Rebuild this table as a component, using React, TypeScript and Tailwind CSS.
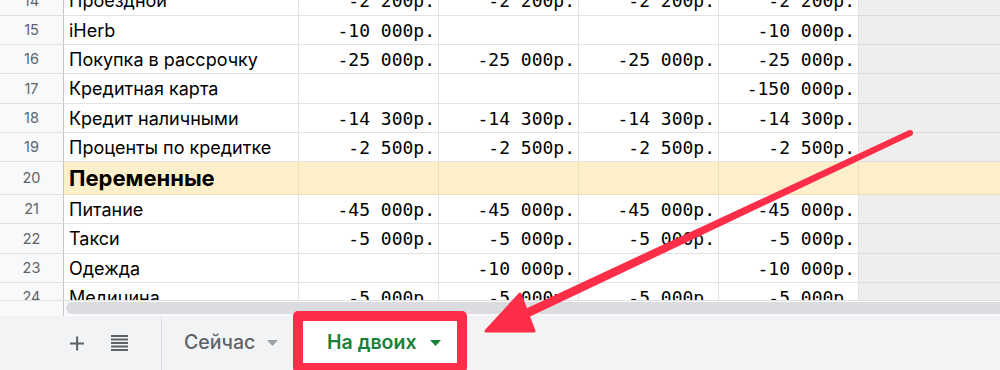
import React from "react";

type Row = {
  n: number;
  label: string;
  v: string[];
  h: number;
  section?: boolean;
};

const rows: Row[] = [
  { n: 14, label: "Проездной", v: ["-2 200р.", "-2 200р.", "-2 200р.", "-2 200р."], h: 30 },
  { n: 15, label: "iHerb", v: ["-10 000р.", "", "", "-10 000р."], h: 29 },
  { n: 16, label: "Покупка в рассрочку", v: ["-25 000р.", "-25 000р.", "-25 000р.", "-25 000р."], h: 29 },
  { n: 17, label: "Кредитная карта", v: ["", "", "", "-150 000р."], h: 30 },
  { n: 18, label: "Кредит наличными", v: ["-14 300р.", "-14 300р.", "-14 300р.", "-14 300р."], h: 29 },
  { n: 19, label: "Проценты по кредитке", v: ["-2 500р.", "-2 500р.", "-2 500р.", "-2 500р."], h: 29 },
  { n: 20, label: "Переменные", v: ["", "", "", ""], h: 33, section: true },
  { n: 21, label: "Питание", v: ["-45 000р.", "-45 000р.", "-45 000р.", "-45 000р."], h: 29 },
  { n: 22, label: "Такси", v: ["-5 000р.", "-5 000р.", "-5 000р.", "-5 000р."], h: 30 },
  { n: 23, label: "Одежда", v: ["", "-10 000р.", "", "-10 000р."], h: 29 },
  { n: 24, label: "Медицина", v: ["-5 000р.", "-5 000р.", "-5 000р.", "-5 000р."], h: 29 },
];

const sans = { fontFamily: "Inter, 'Noto Sans', sans-serif" };
const mono = { fontFamily: "'DejaVu Sans Mono', 'Liberation Mono', monospace" };

function GridRow({ r }: { r: Row }) {
  const cellBg = r.section ? "bg-[#fdefc9]" : "bg-white";
  const restBg = r.section ? "bg-[#fdefc9]" : "bg-[#eeeeee]";
  const lineB = r.section ? "border-[#eedfb6]" : "border-[#e2e2e2]";
  return (
    <div className="flex shrink-0" style={{ height: r.h }}>
      <div className="w-[64px] shrink-0 flex items-center justify-center bg-[#f8f9fa] border-r border-b border-r-[#c4c7c5] border-b-[#e0e0e0] text-[14.5px] text-[#5f6368]" style={sans}>
        {r.n}
      </div>
      <div
        className={`w-[235px] shrink-0 flex items-center pl-[5px] border-r border-b ${lineB} ${cellBg} text-black ${r.section ? "font-bold text-[22px]" : "text-[18px]"}`}
        style={sans}
      >
        <span className="whitespace-nowrap">{r.label}</span>
      </div>
      {r.v.map((val, i) => (
        <div
          key={i}
          className={`w-[140px] shrink-0 flex items-center justify-end pr-[3px] border-r border-b ${lineB} ${cellBg} text-[18px] text-black`}
          style={mono}
        >
          <span className="whitespace-nowrap">{val}</span>
        </div>
      ))}
      <div className={`flex-1 border-b ${r.section ? "border-[#eedfb6]" : "border-[#dcdcdc]"} ${restBg}`} />
    </div>
  );
}

function Arrow() {
  return (
    <svg className="absolute left-0 top-0 pointer-events-none" width="1000" height="370" viewBox="0 0 1000 370">
      <polygon
        points="911.3,135.7 908.7,130.3 523.1,309.9 526.9,318.1"
        fill="#ff2e48"
      />
      <circle cx="910" cy="133" r="3" fill="#ff2e48" />
      <polygon
        points="486,331 520,294 534,331"
        fill="#ff2e48"
        stroke="#ff2e48"
        strokeWidth="3"
        strokeLinejoin="round"
      />
    </svg>
  );
}

export default function App() {
  return (
    <div className="relative w-[1000px] h-[370px] overflow-hidden bg-white" style={sans}>
      <div className="h-[300px] overflow-hidden">
        <div className="flex flex-col mt-[-14px]">
          {rows.map((r) => (
            <GridRow key={r.n} r={r} />
          ))}
        </div>
      </div>
      {/* scroll strip */}
      <div className="flex h-[16px] border-t border-[#e0e0e0] bg-[#f8f9fa]">
        <div className="w-[64px] shrink-0 border-r border-[#c4c7c5]" />
        <div className="flex-1 pl-[2px] pt-[1px]">
          <div className="h-[12px] rounded-l-full bg-[#dadce0]" />
        </div>
      </div>
      {/* tab bar */}
      <div className="flex h-[54px] bg-[#f1f3f4] items-stretch">
        <div className="w-[162px] shrink-0 flex items-center border-r border-[#dadce0]">
          <div className="w-[14px] ml-[70px] flex items-center justify-center">
            <svg width="15" height="15" viewBox="0 0 15 15">
              <rect x="6.5" y="0" width="2.2" height="15" fill="#5f6368" />
              <rect x="0" y="6.4" width="15" height="2.2" fill="#5f6368" />
            </svg>
          </div>
          <div className="ml-[27px]">
            <svg width="17" height="16" viewBox="0 0 17 16">
              <rect x="0" y="0" width="17" height="2" fill="#5f6368" />
              <rect x="0" y="3.5" width="17" height="2" fill="#5f6368" />
              <rect x="0" y="7" width="17" height="2" fill="#5f6368" />
              <rect x="0" y="10.5" width="17" height="2" fill="#5f6368" />
              <rect x="0" y="14" width="17" height="2" fill="#5f6368" />
            </svg>
          </div>
        </div>
        <div className="w-[134px] shrink-0 flex items-center pl-[22px]">
          <span className="text-[19.5px] font-medium text-[#5f6368]">Сейчас</span>
          <svg className="ml-[12px]" width="11" height="6" viewBox="0 0 11 6">
            <polygon points="0,0 11,0 5.5,6" fill="#9aa0a6" />
          </svg>
        </div>
        <div className="w-[168px] shrink-0 flex items-center pl-[31px] bg-white">
          <span className="text-[19.5px] font-semibold text-[#188038]">На двоих</span>
          <svg className="ml-[13px]" width="11" height="6" viewBox="0 0 11 6">
            <polygon points="0,0 11,0 5.5,6" fill="#188038" />
          </svg>
        </div>
        <div className="flex-1" />
      </div>
      {/* annotation box */}
      <div className="absolute left-[293px] top-[311px] w-[174px] h-[62px] border-[10px] border-[#ff2e48] rounded-[5px]" />
      <Arrow />
    </div>
  );
}
